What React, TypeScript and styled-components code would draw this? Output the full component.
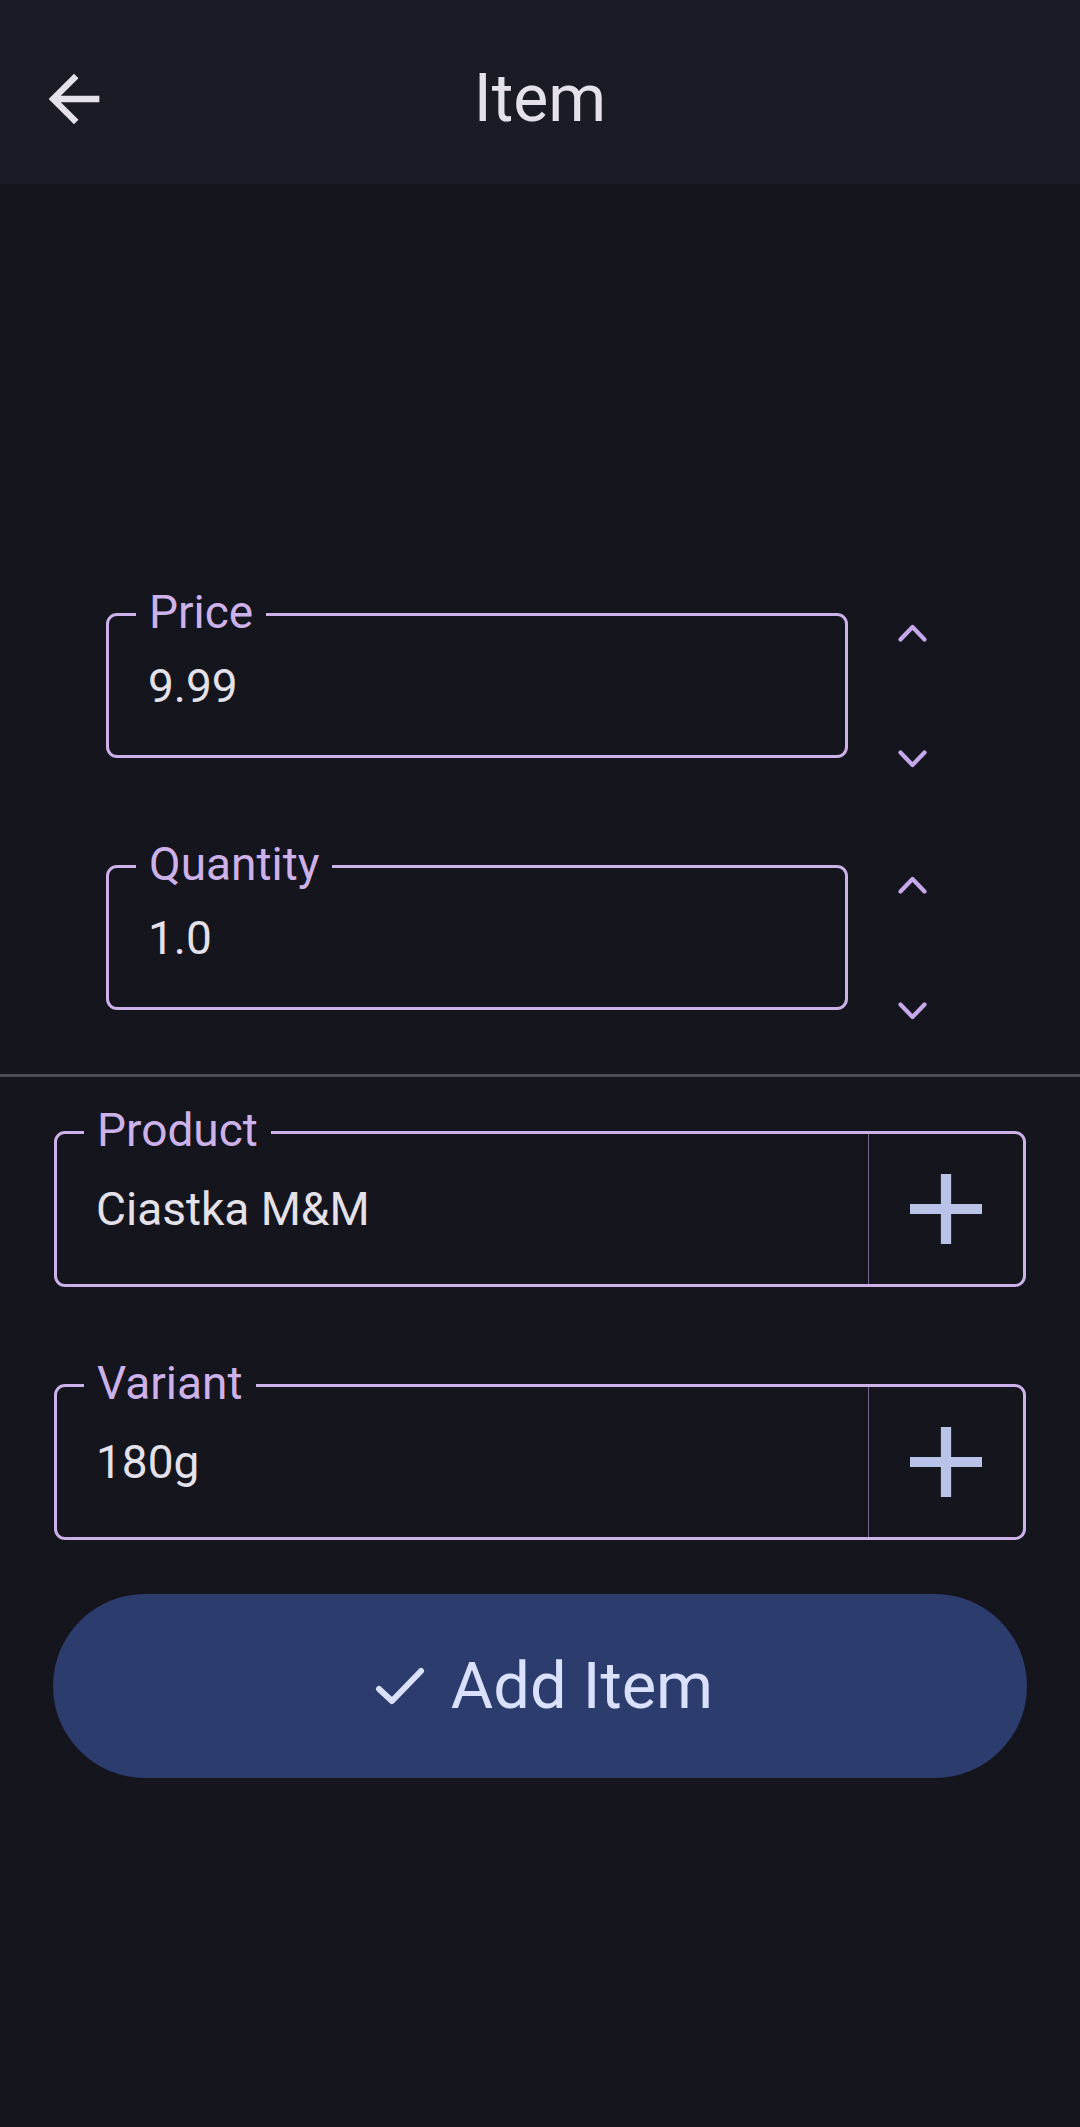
import React from "react";
import styled, { createGlobalStyle } from "styled-components";

const BG = "#15151e";
const BAR = "#1b1b25";
const OUTLINE = "#cdb1e9";
const ON_SURFACE = "#e4e1ea";

const Global = createGlobalStyle`
  html, body { margin: 0; padding: 0; background: ${BG}; }
  body { font-family: Roboto, "Noto Sans", "Liberation Sans", sans-serif; }
  * { box-sizing: border-box; }
`;

const Screen = styled.div`
  width: 1080px;
  min-height: 2127px;
  background: ${BG};
  display: flex;
  flex-direction: column;
`;

const TopBar = styled.header`
  height: 184px;
  background: ${BAR};
  display: grid;
  grid-template-columns: 1fr auto 1fr;
  align-items: center;
  padding: 14px 36px 0 36px;
`;

const BackButton = styled.button`
  justify-self: start;
  width: 76px;
  height: 76px;
  padding: 0;
  border: none;
  background: transparent;
  display: flex;
  align-items: center;
  justify-content: center;
  cursor: pointer;
`;

const Title = styled.h1`
  margin: 0;
  font-weight: 400;
  font-size: 66px;
  line-height: 66px;
  color: ${ON_SURFACE};
  letter-spacing: 0;
`;

const Form = styled.main`
  display: flex;
  flex-direction: column;
  padding-top: 429px;
`;

const StepperRow = styled.div<{ $gap: number }>`
  display: flex;
  align-items: flex-start;
  height: 145px;
  padding-left: 106px;
  margin-top: ${(p) => p.$gap}px;
`;

const FieldBox = styled.div<{ $width?: number; $height: number }>`
  position: relative;
  width: ${(p) => (p.$width ? `${p.$width}px` : "auto")};
  height: ${(p) => p.$height}px;
  border: 3px solid ${OUTLINE};
  border-radius: 11px;
  display: flex;
  align-items: stretch;
`;

const FloatLabel = styled.span`
  position: absolute;
  top: -27px;
  left: 27px;
  padding: 0 13px;
  background: ${BG};
  color: ${OUTLINE};
  font-size: 46px;
  line-height: 46px;
  white-space: nowrap;
`;

const Value = styled.div<{ $pad: number }>`
  flex: 1;
  display: flex;
  align-items: center;
  padding-left: ${(p) => p.$pad}px;
  color: ${ON_SURFACE};
  font-size: 46px;
  line-height: 46px;
`;

const Spinner = styled.div`
  margin-left: 50px;
  margin-top: 11px;
  height: 144px;
  display: flex;
  flex-direction: column;
  justify-content: space-between;
`;

const Chevron = styled.button`
  width: 29px;
  height: 18px;
  padding: 0;
  border: none;
  background: transparent;
  display: block;
  cursor: pointer;
`;

const Divider = styled.hr`
  margin: 64px 0 0 0;
  height: 3px;
  border: none;
  background: #4c4c53;
`;

const PickerRow = styled.div<{ $gap: number }>`
  margin-top: ${(p) => p.$gap}px;
  padding: 0 54px;
`;

const AddSide = styled.button`
  width: 155px;
  border: none;
  border-left: 1.5px solid #75658a;
  background: transparent;
  padding: 0;
  display: flex;
  align-items: center;
  justify-content: center;
  cursor: pointer;
`;

const SubmitButton = styled.button`
  margin: 54px 53px 0 53px;
  height: 184px;
  border: none;
  border-radius: 92px;
  background: #2c3c6d;
  color: #dae1fc;
  display: flex;
  align-items: center;
  justify-content: center;
  gap: 26px;
  font-family: Roboto, "Noto Sans", "Liberation Sans", sans-serif;
  font-size: 65px;
  line-height: 66px;
  font-weight: 400;
  padding: 0 0 0 8px;
  cursor: pointer;
`;

const ArrowBackIcon = () => (
  <svg width="76" height="76" viewBox="0 0 24 24" fill={ON_SURFACE}>
    <path d="M20 11H7.83l5.59-5.59L12 4l-8 8 8 8 1.41-1.41L7.83 13H20v-2z" />
  </svg>
);

const ChevronIcon = ({ up }: { up: boolean }) => (
  <svg width="29" height="18" viewBox="0 0 29 18" fill="none">
    <polyline
      points={up ? "2.5,15.5 14.5,3 26.5,15.5" : "2.5,2.5 14.5,15 26.5,2.5"}
      stroke="#c6a8ea"
      strokeWidth="4.2"
      strokeLinecap="round"
      strokeLinejoin="round"
    />
  </svg>
);

const PlusIcon = () => (
  <svg width="72" height="70" viewBox="5 5 14 14" preserveAspectRatio="none" fill="#b9c3e7">
    <path d="M19 13h-6v6h-2v-6H5v-2h6V5h2v6h6v2z" />
  </svg>
);

const CheckIcon = () => (
  <svg width="50" height="38" viewBox="0 0 50 38" fill="none">
    <polyline
      points="4,22 17,34 46,4"
      stroke="#dae1fc"
      strokeWidth="6"
      strokeLinecap="round"
      strokeLinejoin="round"
    />
  </svg>
);

const Stepper = ({ label, value, gap }: { label: string; value: string; gap: number }) => (
  <StepperRow $gap={gap}>
    <FieldBox $width={742} $height={145}>
      <FloatLabel>{label}</FloatLabel>
      <Value $pad={39}>{value}</Value>
    </FieldBox>
    <Spinner>
      <Chevron aria-label="increase">
        <ChevronIcon up />
      </Chevron>
      <Chevron aria-label="decrease">
        <ChevronIcon up={false} />
      </Chevron>
    </Spinner>
  </StepperRow>
);

const Picker = ({ label, value, gap }: { label: string; value: string; gap: number }) => (
  <PickerRow $gap={gap}>
    <FieldBox $height={156}>
      <FloatLabel>{label}</FloatLabel>
      <Value $pad={39}>{value}</Value>
      <AddSide aria-label={`add ${label}`}>
        <PlusIcon />
      </AddSide>
    </FieldBox>
  </PickerRow>
);

export default function App() {
  return (
    <>
      <Global />
      <Screen>
        <TopBar>
          <BackButton aria-label="back">
            <ArrowBackIcon />
          </BackButton>
          <Title>Item</Title>
          <span />
        </TopBar>
        <Form>
          <Stepper label="Price" value="9.99" gap={0} />
          <Stepper label="Quantity" value="1.0" gap={107} />
          <Divider />
          <Picker label="Product" value="Ciastka M&M" gap={54} />
          <Picker label="Variant" value="180g" gap={97} />
          <SubmitButton>
            <CheckIcon />
            Add Item
          </SubmitButton>
        </Form>
      </Screen>
    </>
  );
}
